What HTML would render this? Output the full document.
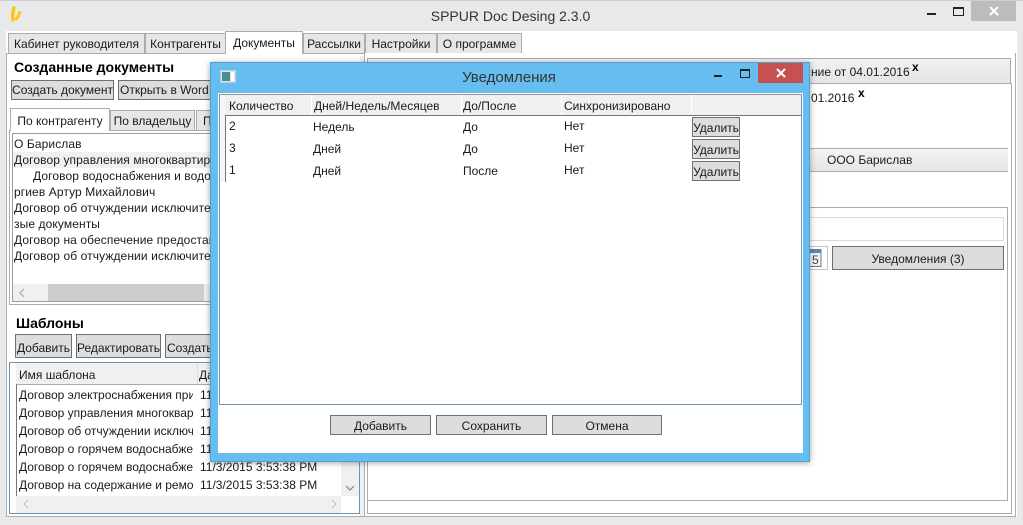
<!DOCTYPE html>
<html><head><meta charset="utf-8">
<style>
html,body{margin:0;padding:0}
body{width:1023px;height:525px;position:relative;overflow:hidden;background:#e9e9e9;font:12px "Liberation Sans",sans-serif;color:#1a1a1a}
div{position:absolute;box-sizing:border-box;white-space:nowrap}
svg{position:absolute}
.tab{background:#e6e6e6;border:1px solid #acacac;text-align:center;line-height:20px}
.btn{background:#dddddd;border:1px solid #707070;text-align:center;line-height:20px}
.clip{overflow:hidden}
.h{background:#f0f0f0}
.b{font-weight:bold;color:#000}
</style></head><body>
<div style="left:0;top:0;width:1023px;height:1px;background:#cfcfcf"></div>
<svg style="left:9px;top:6px" width="15" height="18" viewBox="0 0 15 18"><path d="M4.8 2C3.6 6 3.2 10 4 14" fill="none" stroke="#fdc70f" stroke-width="3.4" stroke-linecap="round"/><path d="M10.6 6.5C10.2 9 9 11 7.5 12.8" fill="none" stroke="#fdc70f" stroke-width="3" stroke-linecap="round"/></svg>
<div style="left:0;top:6px;width:1021px;text-align:center;font-size:14px;line-height:20px;color:#333">SPPUR Doc Desing 2.3.0</div>
<div style="left:927px;top:13px;width:9px;height:2px;background:#222"></div>
<div style="left:953px;top:7px;width:11px;height:9px;border:1px solid #222;border-top-width:2px"></div>
<div style="left:971px;top:1px;width:45px;height:20px;background:#bcbcbc"></div>
<svg style="left:989px;top:6px" width="10" height="10"><path d="M1 1L9 9M9 1L1 9" stroke="#fff" stroke-width="2"/></svg>

<div style="left:6px;top:31px;width:1011px;height:486px;background:#fff"></div>
<div style="left:6px;top:53px;width:1009px;height:464px;border:1px solid #acacac;border-right:0;border-bottom:1px solid #acacac"></div>
<div style="left:360px;top:56px;width:4px;height:460px;background:#f0f0f0"></div>
<div class="tab" style="left:8px;top:33px;width:137px;height:21px">Кабинет руководителя</div>
<div class="tab" style="left:145px;top:33px;width:81px;height:21px">Контрагенты</div>
<div class="tab" style="left:225px;top:31px;width:78px;height:23px;background:#fff;border-bottom:0;line-height:22px">Документы</div>
<div class="tab" style="left:303px;top:33px;width:62px;height:21px">Рассылки</div>
<div class="tab" style="left:365px;top:33px;width:72px;height:21px">Настройки</div>
<div class="tab" style="left:437px;top:33px;width:85px;height:21px">О программе</div>

<div class="b" style="left:14px;top:58px;font-size:14px;line-height:18px">Созданные документы</div>
<div class="btn" style="left:11px;top:80px;width:103px;height:20px;line-height:19px">Создать документ</div>
<div class="btn" style="left:118px;top:80px;width:100px;height:20px;line-height:19px;text-align:left;padding-left:1px">Открыть в Word</div>

<div style="left:9px;top:130px;width:205px;height:175px;border:1px solid #acacac;background:#fff"></div>
<div class="tab" style="left:10px;top:108px;width:100px;height:23px;background:#fff;border-bottom:0;line-height:24px">По контрагенту</div>
<div class="tab" style="left:110px;top:110px;width:85px;height:21px;line-height:20px">По владельцу</div>
<div class="tab" style="left:196px;top:110px;width:20px;height:21px;line-height:20px;text-align:left;padding-left:6px">П</div>
<div style="left:12px;top:133px;width:200px;height:169px;border:1px solid #9c9c9c;background:#fff"></div>
<div style="left:13px;top:152px;width:200px;height:16px;background:#f0f0f0"></div>
<div class="clip" style="left:14px;top:136px;width:197px;height:130px;line-height:16px;letter-spacing:.1px">О Барислав<br>Договор управления многоквартирным<br><span style="margin-left:19px">Договор водоснабжения и водоотведения</span><br>ргиев Артур Михайлович<br>Договор об отчуждении исключительного<br>зые документы<br>Договор на обеспечение предоставления<br>Договор об отчуждении исключительного</div>
<div style="left:13px;top:284px;width:198px;height:17px;background:#f0f0f0"></div>
<div style="left:48px;top:284px;width:156px;height:17px;background:#cdcdcd"></div>
<svg style="left:18px;top:288px" width="8" height="10"><path d="M6 1L2 5L6 9" fill="none" stroke="#aaa" stroke-width="1.2"/></svg>

<div class="b" style="left:16px;top:314px;font-size:14px;line-height:18px">Шаблоны</div>
<div class="btn" style="left:15px;top:334px;width:57px;height:24px;line-height:26px">Добавить</div>
<div class="btn" style="left:76px;top:334px;width:85px;height:24px;line-height:26px">Редактировать</div>
<div class="btn" style="left:165px;top:334px;width:50px;height:24px;line-height:26px;text-align:left;padding-left:1px">Создать</div>

<div style="left:9px;top:362px;width:351px;height:152px;border:1px solid #6d94b8;background:#fff"></div>
<div class="h" style="left:16px;top:363px;width:343px;height:21px"></div>
<div style="left:16px;top:384px;width:325px;height:112px;background:#fff;border-left:1px solid #777;border-top:1px solid #aaa"></div>
<div style="left:341px;top:384px;width:18px;height:112px;background:#f0f0f0"></div>
<div style="left:16px;top:496px;width:325px;height:17px;background:#f0f0f0"></div>
<div style="left:197px;top:363px;width:1px;height:21px;background:#ddd"></div>
<div style="left:19px;top:367px;line-height:16px">Имя шаблона</div>
<div style="left:199px;top:367px;line-height:16px">Да</div>
<div class="clip" style="left:19px;top:386px;width:174px;height:108px;line-height:18px">Договор электроснабжения при<br>Договор управления многоквартирным<br>Договор об отчуждении исключительного<br>Договор о горячем водоснабжении<br>Договор о горячем водоснабжении<br>Договор на содержание и ремонт</div>
<div style="left:200px;top:386px;line-height:18px">11<br>11<br>11<br>11<br>11/3/2015 3:53:38 PM<br>11/3/2015 3:53:38 PM</div>
<svg style="left:345px;top:485px" width="10" height="8"><path d="M1 1L5 5L9 1" fill="none" stroke="#888" stroke-width="1.2"/></svg>
<svg style="left:22px;top:499px" width="8" height="10"><path d="M6 1L2 5L6 9" fill="none" stroke="#c4c4c4" stroke-width="1.2"/></svg>
<svg style="left:330px;top:499px" width="8" height="10"><path d="M2 1L6 5L2 9" fill="none" stroke="#c4c4c4" stroke-width="1.2"/></svg>

<div style="left:364px;top:53px;width:652px;height:464px;border:1px solid #acacac;border-top:0;background:#fff"></div>
<div style="left:367px;top:83px;width:645px;height:431px;border:1px solid #acacac;border-top:1px solid #bdbdbd;background:#fff"></div>
<div style="left:367px;top:207px;width:641px;height:294px;border:1px solid #acacac;background:#fff"></div>
<div class="tab" style="left:367px;top:58px;width:644px;height:26px;background:linear-gradient(#f2f2f2,#e4e4e4)"></div>
<div style="left:368px;top:84px;width:643px;height:64px;background:#fff"></div>
<div style="left:811px;top:64px;line-height:16px">ние от 04.01.2016</div>
<div class="b" style="left:912px;top:60px;line-height:14px">x</div>
<div style="left:811px;top:90px;line-height:16px">01.2016</div>
<div class="b" style="left:858px;top:86px;line-height:14px">x</div>
<div style="left:370px;top:148px;width:638px;height:24px;background:linear-gradient(#f2f2f2,#e6e6e6);border-top:1px solid #acacac;border-bottom:1px solid #acacac;padding-left:457px;line-height:22px">ООО Барислав</div>
<div style="left:370px;top:217px;width:634px;height:24px;border:1px solid #d9d9e0"></div>
<div style="left:806px;top:246px;width:22px;height:24px;border:1px solid #b9c6d4"></div>
<svg style="left:806px;top:248px" width="16" height="20" viewBox="0 0 16 20"><rect x="0" y="1.5" width="15" height="17" fill="#f2f2f2" stroke="#777"/><rect x="0" y="1" width="15" height="4" fill="#5a88b5"/><text x="6" y="16" font-size="12" font-family="Liberation Sans" fill="#444">5</text></svg>
<div class="btn" style="left:832px;top:246px;width:172px;height:24px;line-height:24px">Уведомления (3)</div>

<!-- dialog -->
<div style="left:210px;top:62px;width:600px;height:400px;background:#66bdf0;border:1px solid #4f9fd0;box-shadow:0 1px 6px rgba(0,0,0,.35)"></div>
<svg style="left:220px;top:70px" width="16" height="14"><rect x=".5" y=".5" width="15" height="12" fill="#d8e4ec" stroke="#b5cfe0"/><rect x="2" y="2" width="8" height="9" fill="#4f8c8a"/><rect x="11" y="2" width="3" height="9" fill="#fff"/></svg>
<div style="left:209px;top:68px;width:600px;text-align:center;font-size:15px;line-height:19px;color:#333">Уведомления</div>
<div style="left:714px;top:75px;width:8px;height:2px;background:#222"></div>
<div style="left:740px;top:69px;width:10px;height:9px;border:1px solid #222;border-top-width:2px"></div>
<div style="left:758px;top:63px;width:45px;height:20px;background:#c75050"></div>
<svg style="left:776px;top:68px" width="10" height="10"><path d="M1 1L9 9M9 1L1 9" stroke="#fff" stroke-width="2"/></svg>

<div style="left:218px;top:93px;width:585px;height:360px;background:#fff"></div>
<div style="left:219px;top:94px;width:583px;height:311px;border:1px solid #6d94b8;border-top:1px solid #999;background:#fff"></div>
<div class="h" style="left:225px;top:95px;width:576px;height:20px"></div>
<div style="left:220px;top:95px;width:5px;height:87px;background:#f6f6f6"></div>
<div style="left:225px;top:115px;width:576px;height:1px;background:#777"></div>
<div style="left:225px;top:116px;width:1px;height:66px;background:#777"></div>
<div style="left:311px;top:95px;width:1px;height:20px;background:#fff"></div>
<div style="left:461px;top:95px;width:1px;height:20px;background:#fff"></div>
<div style="left:561px;top:95px;width:1px;height:20px;background:#fff"></div>
<div style="left:691px;top:95px;width:1px;height:20px;background:#fff"></div>
<div style="left:229px;top:98px;line-height:16px">Количество</div>
<div style="left:314px;top:98px;line-height:16px">Дней/Недель/Месяцев</div>
<div style="left:463px;top:98px;line-height:16px">До/После</div>
<div style="left:564px;top:98px;line-height:16px">Синхронизировано</div>
<div style="left:229px;top:118px;line-height:16px">2</div>
<div style="left:313px;top:119px;line-height:16px">Недель</div>
<div style="left:463px;top:119px;line-height:16px">До</div>
<div style="left:564px;top:118px;line-height:16px">Нет</div>
<div style="left:229px;top:140px;line-height:16px">3</div>
<div style="left:313px;top:141px;line-height:16px">Дней</div>
<div style="left:463px;top:141px;line-height:16px">До</div>
<div style="left:564px;top:140px;line-height:16px">Нет</div>
<div style="left:229px;top:162px;line-height:16px">1</div>
<div style="left:313px;top:163px;line-height:16px">Дней</div>
<div style="left:463px;top:163px;line-height:16px">После</div>
<div style="left:564px;top:162px;line-height:16px">Нет</div>
<div class="btn" style="left:692px;top:117px;width:48px;height:20px">Удалить</div>
<div class="btn" style="left:692px;top:139px;width:48px;height:20px">Удалить</div>
<div class="btn" style="left:692px;top:161px;width:48px;height:20px">Удалить</div>
<div class="btn" style="left:330px;top:415px;width:101px;height:20px">Добавить</div>
<div class="btn" style="left:436px;top:415px;width:111px;height:20px">Сохранить</div>
<div class="btn" style="left:552px;top:415px;width:110px;height:20px">Отмена</div>
</body></html>
